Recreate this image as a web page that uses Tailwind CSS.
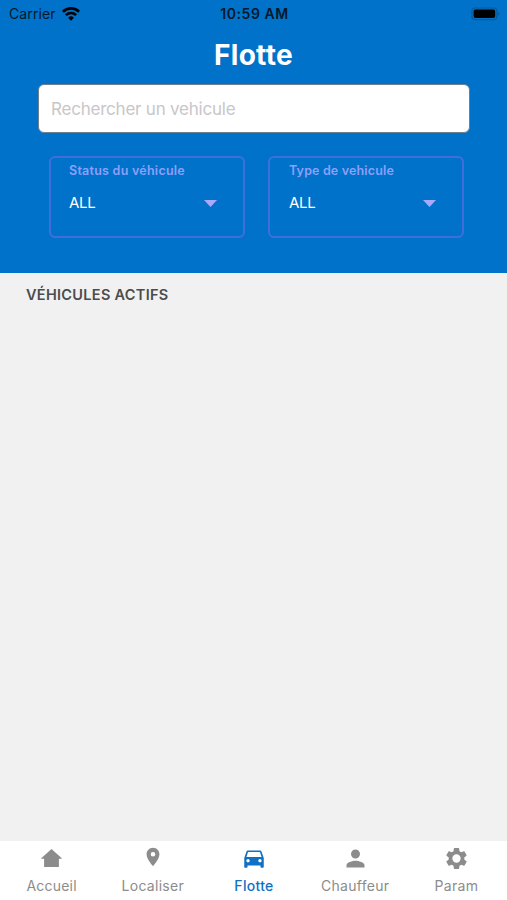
<!DOCTYPE html>
<html lang="fr">
<head>
  <meta charset="UTF-8" />
  <meta name="viewport" content="width=device-width, initial-scale=1.0" />
  <title>Flotte</title>
  <script src="https://cdn.jsdelivr.net/npm/@tailwindcss/browser@4"></script>
</head>
<body class="h-[900px] flex flex-col overflow-hidden bg-[#f1f1f1] font-['Inter',sans-serif]">
  <header class="h-[273px] shrink-0 bg-[#0072c9]">
    <!-- Status bar -->
    <div class="grid grid-cols-3 items-center h-7 pl-[9px] pr-[7px] text-[#06182b]">
      <div class="flex items-center gap-[6px]">
        <span class="text-[14px] leading-7 tracking-[0.1px]">Carrier</span>
        <svg class="w-[18px] h-[14px]" viewBox="0 0 18 14" fill="none" stroke="#000" stroke-width="2.7">
          <path d="M.9 4.7a11.6 11.6 0 0 1 16.2 0" />
          <path d="M3.9 8.1a7.3 7.3 0 0 1 10.2 0" />
          <path d="M9 13.7 6.1 10.8a4.1 4.1 0 0 1 5.8 0Z" fill="#000" stroke="none" />
        </svg>
      </div>
      <span class="text-center text-[14px] leading-7 font-semibold tracking-[0.55px] whitespace-nowrap">10:59 AM</span>
      <svg class="justify-self-end w-[29px] h-[14px]" viewBox="0 0 29 14">
        <rect x=".9" y="1" width="25" height="11.6" rx="3.4" fill="none" stroke="#06579b" stroke-width="1.2" />
        <rect x="2.6" y="2.5" width="21.6" height="8.6" rx="2" fill="#000" />
        <path d="M27.3 5v3.8c1.5-.6 1.5-3.2 0-3.8" fill="#06579b" />
      </svg>
    </div>

    <h1 class="mt-[7px] text-center text-[28px] leading-10 font-bold tracking-[0.3px] text-white">Flotte</h1>

    <!-- Search -->
    <input type="text" placeholder="Rechercher un vehicule"
      class="block mt-[9px] ml-[38px] w-[432px] h-[49px] px-3 rounded-[6px] border border-[#6f7f8c] bg-white text-[17px] tracking-[-0.22px] placeholder:text-[#c7c7c9] outline-none" />

    <!-- Filters -->
    <div class="flex gap-[23px] mt-[23px] ml-[49px]">
      <div class="w-[196px] h-[82px] rounded-[6px] border-2 border-[#3f6fdd] pl-[18px] pt-[3px]">
        <p class="text-[12.5px] leading-5 font-semibold tracking-[0.25px] text-[#8f9ffb]">Status du véhicule</p>
        <div class="flex items-center justify-between mt-3 pr-[26px] text-[15px] leading-5 text-white">
          <span class="tracking-[-0.3px]">ALL</span>
          <svg class="w-[13px] h-[7px]" viewBox="0 0 13 7" fill="#aaaafc"><path d="M0 0h13L6.5 7z" /></svg>
        </div>
      </div>
      <div class="w-[196px] h-[82px] rounded-[6px] border-2 border-[#3f6fdd] pl-[19px] pt-[3px]">
        <p class="text-[12.5px] leading-5 font-semibold tracking-[0.15px] text-[#8f9ffb]">Type de vehicule</p>
        <div class="flex items-center justify-between mt-3 pr-[26px] text-[15px] leading-5 text-white">
          <span class="tracking-[-0.3px]">ALL</span>
          <svg class="w-[13px] h-[7px]" viewBox="0 0 13 7" fill="#aaaafc"><path d="M0 0h13L6.5 7z" /></svg>
        </div>
      </div>
    </div>
  </header>

  <main class="flex-1 pt-3 pl-[26px]">
    <h2 class="text-[14.5px] leading-5 font-semibold tracking-[0.3px] text-[#4c4c4c]">VÉHICULES ACTIFS</h2>
  </main>

  <!-- Tab bar -->
  <nav class="grid grid-cols-5 h-[59px] shrink-0 pl-px bg-white text-[14px] leading-5 text-[#8c8c8c]">
    <a href="#" class="flex flex-col items-center">
      <span class="flex items-center justify-center h-[34px]">
        <svg class="w-[21px] h-[18px]" viewBox="0 0 21 18" fill="currentColor"><path d="M10.5 0 .2 9.2v.6h2.900V18h14.800V9.800h2.900v-.6z" /></svg>
      </span>
      <span class="mt-px tracking-[0.2px]">Accueil</span>
    </a>
    <a href="#" class="flex flex-col items-center">
      <span class="flex items-center justify-center h-[34px]">
        <svg class="w-[22px] h-[22px] mb-[3px]" viewBox="0 0 24 24" fill="currentColor"><path d="M12 2C8.13 2 5 5.13 5 9c0 5.25 7 13 7 13s7-7.75 7-13c0-3.87-3.13-7-7-7zm0 9.5a2.5 2.5 0 0 1 0-5 2.5 2.5 0 0 1 0 5z" /></svg>
      </span>
      <span class="mt-px tracking-[0.3px]">Localiser</span>
    </a>
    <a href="#" aria-current="page" class="flex flex-col items-center text-[#0f70c4]">
      <span class="flex items-center justify-center h-[34px]">
        <svg class="w-[26px] h-[26px]" viewBox="0 0 24 24" fill="currentColor"><path d="M18.92 6.01C18.72 5.42 18.16 5 17.5 5h-11c-.66 0-1.21.42-1.42 1.01L3 12v8c0 .55.45 1 1 1h1c.55 0 1-.45 1-1v-1h12v1c0 .55.45 1 1 1h1c.55 0 1-.45 1-1v-8l-2.08-5.99zM6.5 16c-.83 0-1.5-.67-1.5-1.5S5.67 13 6.5 13s1.5.67 1.5 1.5S7.33 16 6.5 16zm11 0c-.83 0-1.5-.67-1.5-1.5s.67-1.5 1.5-1.5 1.5.67 1.5 1.5-.67 1.5-1.5 1.5zM5 11l1.5-4.5h11L19 11H5z" /></svg>
      </span>
      <span class="mt-px font-medium tracking-[0.3px]">Flotte</span>
    </a>
    <a href="#" class="flex flex-col items-center">
      <span class="flex items-center justify-center h-[34px]">
        <svg class="w-[27px] h-[27px]" viewBox="0 0 24 24" fill="currentColor"><path d="M12 12c2.21 0 4-1.79 4-4s-1.79-4-4-4-4 1.79-4 4 1.79 4 4 4zm0 2c-2.67 0-8 1.34-8 4v2h16v-2c0-2.66-5.33-4-8-4z" /></svg>
      </span>
      <span class="mt-px tracking-[0.3px]">Chauffeur</span>
    </a>
    <a href="#" class="flex flex-col items-center">
      <span class="flex items-center justify-center h-[34px]">
        <svg class="w-[25px] h-[25px]" viewBox="0 0 24 24" fill="currentColor"><path d="M19.43 12.98c.04-.32.07-.64.07-.98s-.03-.66-.07-.98l2.11-1.65c.19-.15.24-.42.12-.64l-2-3.46c-.12-.22-.39-.3-.61-.22l-2.49 1c-.52-.4-1.08-.73-1.69-.98l-.38-2.65C14.46 2.18 14.25 2 14 2h-4c-.25 0-.46.18-.49.42l-.38 2.65c-.61.25-1.17.59-1.69.98l-2.49-1c-.23-.09-.49 0-.61.22l-2 3.46c-.13.22-.07.49.12.64l2.11 1.65c-.04.32-.07.65-.07.98s.03.66.07.98l-2.11 1.65c-.19.15-.24.42-.12.64l2 3.46c.12.22.39.3.61.22l2.49-1c.52.4 1.08.73 1.69.98l.38 2.65c.03.24.24.42.49.42h4c.25 0 .46-.18.49-.42l.38-2.65c.61-.25 1.17-.59 1.69-.98l2.49 1c.23.09.49 0 .61-.22l2-3.46c.12-.22.07-.49-.12-.64l-2.11-1.65zM12 16a4 4 0 1 1 0-8 4 4 0 0 1 0 8z" /></svg>
      </span>
      <span class="mt-px tracking-[0.3px]">Param</span>
    </a>
  </nav>
</body>
</html>
